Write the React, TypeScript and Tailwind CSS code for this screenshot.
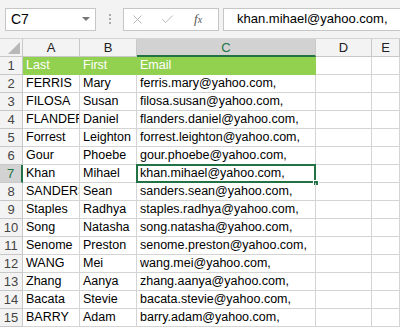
import { X, Check } from 'lucide-react';

const rows = [
  ['FERRIS', 'Mary', 'ferris.mary@yahoo.com,'],
  ['FILOSA', 'Susan', 'filosa.susan@yahoo.com,'],
  ['FLANDERS', 'Daniel', 'flanders.daniel@yahoo.com,'],
  ['Forrest', 'Leighton', 'forrest.leighton@yahoo.com,'],
  ['Gour', 'Phoebe', 'gour.phoebe@yahoo.com,'],
  ['Khan', 'Mihael', 'khan.mihael@yahoo.com,'],
  ['SANDERS', 'Sean', 'sanders.sean@yahoo.com,'],
  ['Staples', 'Radhya', 'staples.radhya@yahoo.com,'],
  ['Song', 'Natasha', 'song.natasha@yahoo.com,'],
  ['Senome', 'Preston', 'senome.preston@yahoo.com,'],
  ['WANG', 'Mei', 'wang.mei@yahoo.com,'],
  ['Zhang', 'Aanya', 'zhang.aanya@yahoo.com,'],
  ['Bacata', 'Stevie', 'bacata.stevie@yahoo.com,'],
  ['BARRY', 'Adam', 'barry.adam@yahoo.com,'],
];

const cols = 'grid grid-cols-[23px_57px_57px_179px_56px_1fr]';
const cell = 'h-[18px] border-r border-b border-[#d4d4d4] text-[12.5px] leading-[17px] px-[3px] whitespace-nowrap overflow-hidden';

export default function App() {
  return (
    <div className="w-[400px] h-[333px] overflow-hidden bg-white text-black" style={{ fontFamily: '"Liberation Sans", Arial, sans-serif' }}>
      {/* formula bar */}
      <div className="h-[39px] bg-[#f3f3f3] flex items-center border-b border-[#d4d4d4]">
        <div className="ml-[5px] w-[91px] h-[23px] bg-white border border-[#c6c6c6] flex items-center justify-between px-[5px]">
          <span className="text-[14px]">C7</span>
          <span className="w-0 h-0 border-l-[4px] border-r-[4px] border-t-[4px] border-l-transparent border-r-transparent border-t-[#777]" />
        </div>
        <div className="w-[27px] flex flex-col items-center gap-[2px]">
          <span className="w-[2px] h-[2px] bg-[#aaa]" />
          <span className="w-[2px] h-[2px] bg-[#aaa]" />
          <span className="w-[2px] h-[2px] bg-[#aaa]" />
        </div>
        <div className="w-[96px] h-[23px] bg-white border border-[#c6c6c6] flex items-center px-[6px] gap-[10px]">
          <X className="w-[15px] h-[15px] text-[#b3b3b3]" strokeWidth={1.5} />
          <Check className="w-[15px] h-[15px] text-[#b3b3b3] ml-[5px]" strokeWidth={1.5} />
          <span className="ml-[9px] italic text-[13px] text-[#555]" style={{ fontFamily: '"Liberation Serif", serif' }}>
            f<span className="text-[10px]">x</span>
          </span>
        </div>
        <div className="ml-[4px] flex-1 h-[23px] bg-white border border-[#c6c6c6] border-r-0 flex items-center pl-[13px] text-[13px]">
          khan.mihael@yahoo.com,
        </div>
      </div>

      {/* column headers */}
      <div className={cols}>
        <div className="h-[18px] bg-[#f3f3f3] border-r border-b border-[#c8c8c8] relative">
          <span className="absolute right-[2px] bottom-[2px] w-0 h-0" style={{ borderBottom: '12px solid #b8b8b8', borderLeft: '12px solid transparent' }} />
        </div>
        {['A', 'B'].map((c) => (
          <div key={c} className="h-[18px] bg-[#f3f3f3] border-r border-b border-[#c8c8c8] text-[13px] leading-[18px] text-center text-[#222]">{c}</div>
        ))}
        <div className="h-[18px] bg-[#d2d2d2] border-r border-[#c8c8c8] border-b-2 border-b-[#217346] text-[13px] leading-[17px] text-center text-[#217346]">C</div>
        {['D', 'E'].map((c) => (
          <div key={c} className="h-[18px] bg-[#f3f3f3] border-r border-b border-[#c8c8c8] text-[13px] leading-[18px] text-center text-[#222] overflow-hidden">{c}</div>
        ))}
      </div>

      {/* header row */}
      <div className={cols}>
        <div className="h-[18px] bg-[#f3f3f3] border-r border-b border-[#c8c8c8] text-[13px] leading-[17px] text-center text-[#444]">1</div>
        {['Last', 'First', 'Email'].map((h) => (
          <div key={h} className={`${cell} bg-[#92d050] border-r-[#92d050] border-b-[#92d050] text-white`}>{h}</div>
        ))}
        <div className={cell} />
        <div className={cell} />
      </div>

      {rows.map((r, i) => {
        const n = i + 2;
        const sel = n === 7;
        return (
          <div key={n} className={cols}>
            <div className={`h-[18px] border-b border-[#c8c8c8] text-[13px] leading-[17px] text-center ${sel ? 'bg-[#d2d2d2] border-r-2 border-r-[#217346] text-[#217346]' : 'bg-[#f3f3f3] border-r text-[#444]'}`}>{n}</div>
            <div className={cell}>{r[0]}</div>
            <div className={cell}>{r[1]}</div>
            <div className={`${cell} relative overflow-visible`}>
              {r[2]}
              {sel && (
                <>
                  <span className="absolute -left-[1px] -top-[1px] -right-[1px] -bottom-[1px] border-2 border-[#217346]" />
                  <span className="absolute -right-[4px] -bottom-[4px] w-[6px] h-[6px] bg-[#217346] border border-white" />
                </>
              )}
            </div>
            <div className={cell} />
            <div className={cell} />
          </div>
        );
      })}
    </div>
  );
}
